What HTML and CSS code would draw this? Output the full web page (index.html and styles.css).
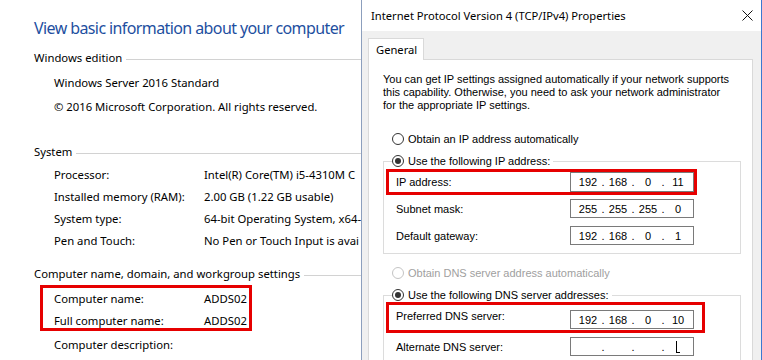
FILE: index.html
```html
<!DOCTYPE html>
<html lang="en">
<head>
    <meta charset="UTF-8">
    <meta name="viewport" content="width=device-width, initial-scale=1.0">
    <title>System and TCP/IPv4 Properties</title>
    <link rel="stylesheet" href="styles.css">
</head>
<body>
<div class="screen">

    <!-- System control panel page (behind the dialog) -->
    <section class="sysinfo">
        <h1 class="page-title">View basic information about your computer</h1>

        <div class="group-head head-edition">Windows edition</div>
        <div class="edition">
            <div class="edition-row">Windows Server 2016 Standard</div>
            <div class="edition-row">© 2016 Microsoft Corporation. All rights reserved.</div>
        </div>

        <div class="group-head head-system">System</div>
        <div class="spec-list">
            <div class="spec"><span class="spec-label">Processor:</span><span>Intel(R) Core(TM) i5-4310M C</span></div>
            <div class="spec"><span class="spec-label">Installed memory (RAM):</span><span>2.00 GB (1.22 GB usable)</span></div>
            <div class="spec"><span class="spec-label">System type:</span><span>64-bit Operating System, x64-</span></div>
            <div class="spec"><span class="spec-label">Pen and Touch:</span><span>No Pen or Touch Input is avai</span></div>
        </div>

        <div class="group-head head-name">Computer name, domain, and workgroup settings</div>
        <div class="name-box">
            <div class="spec"><span class="spec-label">Computer name:</span><span>ADDS02</span></div>
            <div class="spec"><span class="spec-label">Full computer name:</span><span>ADDS02</span></div>
        </div>
        <div class="spec spec-desc"><span class="spec-label">Computer description:</span><span></span></div>
    </section>

    <!-- Internet Protocol Version 4 dialog -->
    <section class="dialog">
        <header class="dialog-title">
            <span>Internet Protocol Version 4 (TCP/IPv4) Properties</span>
            <svg class="close-icon" width="11" height="11" viewBox="0 0 11 11">
                <path d="M0.5 0.5 L10.5 10.5 M10.5 0.5 L0.5 10.5" stroke="#111" stroke-width="1" fill="none"/>
            </svg>
        </header>

        <div class="dialog-body">
            <div class="tabs"><div class="tab">General</div></div>

            <div class="tab-panel">
                <p class="intro">You can get IP settings assigned automatically if your network supports
                    this capability. Otherwise, you need to ask your network administrator
                    for the appropriate IP settings.</p>

                <div class="radio radio-ip-auto"><span class="dot"></span>Obtain an IP address automatically</div>

                <fieldset class="frame frame-ip">
                    <legend class="radio"><span class="dot checked"></span>Use the following IP address:</legend>

                    <div class="field mark mark-ip">
                        <span>IP address:</span>
                        <div class="ipbox"><span>192</span><i>.</i><span>168</span><i>.</i><span>0</span><i>.</i><span>11</span></div>
                    </div>
                    <div class="field">
                        <span>Subnet mask:</span>
                        <div class="ipbox"><span>255</span><i>.</i><span>255</span><i>.</i><span>255</span><i>.</i><span>0</span></div>
                    </div>
                    <div class="field">
                        <span>Default gateway:</span>
                        <div class="ipbox"><span>192</span><i>.</i><span>168</span><i>.</i><span>0</span><i>.</i><span>1</span></div>
                    </div>
                </fieldset>

                <div class="radio radio-dns-auto disabled"><span class="dot"></span>Obtain DNS server address automatically</div>

                <fieldset class="frame frame-dns">
                    <legend class="radio"><span class="dot checked"></span>Use the following DNS server addresses:</legend>

                    <div class="field mark mark-dns">
                        <span>Preferred DNS server:</span>
                        <div class="ipbox"><span>192</span><i>.</i><span>168</span><i>.</i><span>0</span><i>.</i><span>10</span></div>
                    </div>
                    <div class="field">
                        <span>Alternate DNS server:</span>
                        <div class="ipbox"><span></span><i>.</i><span></span><i>.</i><span></span><i>.</i><span><b class="caret"></b></span></div>
                    </div>
                </fieldset>
            </div>
        </div>
    </section>

</div>
</body>
</html>
```

FILE: styles.css
```css
body {
    margin: 0;
    padding: 0;
    background-color: #fff;
    font-family: "Noto Sans", "Open Sans", sans-serif;
    color: #000;
}

.screen {
    display: flex;
    width: 762px;
    height: 360px;
    overflow: hidden;
}

/* ---------- system page ---------- */

.sysinfo {
    width: 361px;
    flex: none;
    padding-left: 34px;
    box-sizing: border-box;
    overflow: hidden;
    white-space: nowrap;
    font-size: 11.3px;
}

.page-title {
    margin: 16px 0 0;
    font-size: 16px;
    font-weight: normal;
    letter-spacing: -0.6px;
    line-height: 24px;
    color: #1e4fa0;
}

.group-head {
    display: flex;
    align-items: center;
    height: 20px;
}

.group-head::after {
    content: "";
    flex: 1;
    margin: 4px 0 0 4px;
    border-top: 1px solid #d2d2d2;
}

.head-edition { margin-top: 7px; }
.head-system { margin-top: 22px; }
.head-name { margin-top: 11px; }

.edition {
    margin-top: 4px;
    padding-left: 20px;
}

.edition-row {
    line-height: 24px;
}

.spec-list {
    margin-top: 3px;
}

.spec {
    display: flex;
    line-height: 22px;
    padding-left: 20px;
}

.spec-label {
    width: 150px;
    flex: none;
}

.name-box {
    width: 206px;
    height: 40px;
    margin: 2px 0 0 6px;
    border: 3px solid #e60000;
}

.name-box .spec {
    padding-left: 11px;
}

.spec-desc {
    margin-top: 3px;
}

/* ---------- dialog ---------- */

.dialog {
    width: 401px;
    flex: none;
    display: flex;
    flex-direction: column;
    border-left: 1px solid #8c9fbd;
    border-right: 1px solid #3b78d0;
    box-sizing: border-box;
    background-color: #f0f0f0;
    font-family: "Liberation Sans", Arial, sans-serif;
    font-size: 11px;
    white-space: nowrap;
}

.dialog-title {
    height: 31px;
    flex: none;
    display: flex;
    align-items: center;
    justify-content: space-between;
    padding: 0 8px 0 9px;
    background-color: #fff;
    font-family: "Noto Sans", "Open Sans", sans-serif;
    font-size: 11.2px;
}

.dialog-body {
    flex: 1;
    padding: 7px 8px 0 6px;
}

.tabs {
    display: flex;
    margin-bottom: -1px;
}

.tab {
    position: relative;
    z-index: 1;
    height: 21px;
    padding: 0 6px 0 7px;
    display: flex;
    align-items: center;
    background-color: #fff;
    border: 1px solid #d9d9d9;
    border-bottom: none;
    font-family: "Noto Sans", "Open Sans", sans-serif;
    font-size: 11.2px;
}

.tab-panel {
    height: 320px;
    background-color: #fff;
    border: 1px solid #d9d9d9;
    padding: 13px 11px 0 14px;
}

.intro {
    margin: 0;
    line-height: 13px;
    white-space: normal;
    width: 350px;
}

.radio {
    display: flex;
    align-items: center;
    height: 14px;
    gap: 4px;
}

.radio-ip-auto {
    margin: 20px 0 0 9px;
}

.radio-dns-auto {
    margin: 12px 0 0 9px;
}

.dot {
    width: 12px;
    height: 12px;
    box-sizing: border-box;
    border: 1px solid #333;
    border-radius: 50%;
    background-color: #fff;
    display: flex;
    align-items: center;
    justify-content: center;
}

.dot.checked::after {
    content: "";
    width: 6px;
    height: 6px;
    border-radius: 50%;
    background-color: #333;
}

.disabled {
    color: #a0a0a0;
}

.disabled .dot {
    border-color: #c4c4c4;
}

.frame {
    margin: 8px 0 0;
    padding: 0 2px 4px;
    border: 1px solid #dcdcdc;
    min-width: 0;
}

.frame legend {
    margin-left: 6px;
    padding: 0 3px 0 0;
    background-color: #fff;
}

.field {
    display: grid;
    grid-template-columns: 174px 124px;
    align-items: center;
    height: 27px;
    padding-left: 10px;
}

.mark {
    width: max-content;
    border: 3px solid #e60000;
    padding-left: 7px;
}

.mark-ip {
    height: 20px;
    margin-top: 1px;
}

.mark-ip .ipbox {
    height: 20px;
}

.mark-dns {
    box-sizing: border-box;
    height: 31px;
    padding-top: 5px;
    padding-right: 8px;
    align-items: start;
}

.ipbox {
    height: 19px;
    box-sizing: border-box;
    border: 1px solid #7a7a7a;
    background-color: #fff;
    display: grid;
    grid-template-columns: 22px 8px 22px 8px 22px 8px 22px;
    align-items: center;
    padding-left: 6px;
}

.ipbox span,
.ipbox i {
    text-align: center;
    font-style: normal;
}

.caret {
    display: inline-block;
    width: 3px;
    height: 11px;
    border-left: 1px solid #000;
    border-bottom: 1px solid #000;
    vertical-align: middle;
}
```
